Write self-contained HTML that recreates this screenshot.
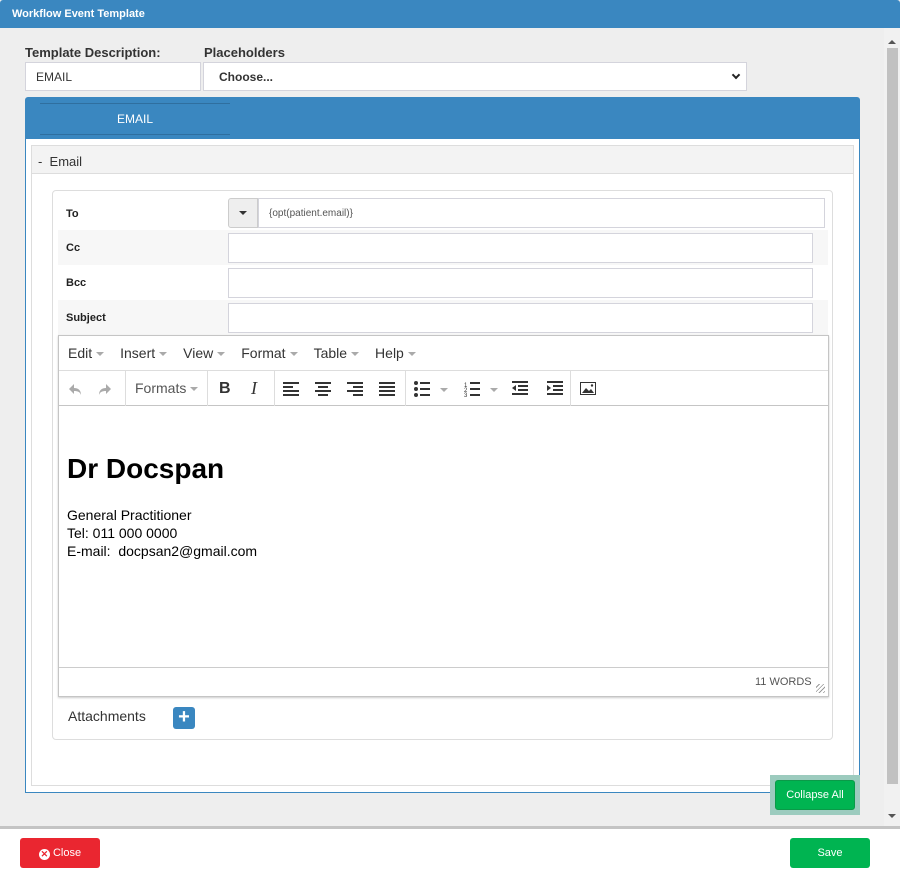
<!DOCTYPE html>
<html><head><meta charset="utf-8"><style>
*{box-sizing:border-box;margin:0;padding:0}
body{width:900px;height:874px;position:relative;background:#fff;font-family:"Liberation Sans",sans-serif;overflow:hidden}
.a{position:absolute}
.lbl{font-weight:bold;font-size:13px;color:#333}
.inp{background:#fff;border:1px solid #d4d4dc}
.row{position:absolute;left:58px;width:770px;height:35px}
.row b{position:absolute;left:8px;top:12px;font-size:11px;color:#222}
.menu span{margin-right:16px}
.menu span:after{content:"";display:inline-block;margin-left:4px;border:4px solid transparent;border-top-color:#aaa;border-bottom:0;vertical-align:middle}
.ic{position:absolute;top:10px}
.sep{position:absolute;top:0;width:1px;height:35px;background:#ddd}
</style></head><body>
<div class="a" style="left:0;top:0;width:900px;height:826px;background:#eeeeee"></div>
<div class="a" style="left:0;top:0;width:900px;height:28px;background:#3a87c0;border-radius:3px 3px 0 0"></div>
<div class="a" style="left:12px;top:8px;color:#fff;font-weight:bold;font-size:11px">Workflow Event Template</div>
<div class="a" style="left:884px;top:28px;width:16px;height:798px;background:#f1f1f1"></div>
<div class="a" style="left:887px;top:48px;width:11px;height:736px;background:#c1c1c1"></div>
<div class="a" style="left:888px;top:40px;border:4px solid transparent;border-bottom:4px solid #555;border-top:0"></div>
<div class="a" style="left:888px;top:814px;border:4px solid transparent;border-top:4px solid #555;border-bottom:0"></div>

<div class="a lbl" style="left:25px;top:45px">Template Description:</div>
<div class="a lbl" style="left:204px;top:45px">Placeholders</div>
<div class="a inp" style="left:25px;top:62px;width:176px;height:29px;font-size:12px;color:#333;padding:7px 10px">EMAIL</div>
<div class="a inp" style="left:203px;top:62px;width:544px;height:29px;font-size:12px;color:#333;font-weight:bold;padding:7px 15px">Choose...</div>
<div class="a" style="left:733px;top:72px;width:6px;height:6px;border-right:2px solid #222;border-bottom:2px solid #222;transform:rotate(45deg)"></div>

<div class="a" style="left:25px;top:97px;width:835px;height:696px;background:#3a87c0;border-radius:3px 3px 0 0"></div>
<div class="a" style="left:40px;top:103px;width:190px;height:32px;border-top:1px solid #2f6f9f;border-bottom:1px solid #2f6f9f;color:#fff;font-size:12px;text-align:center;line-height:31px">EMAIL</div>
<div class="a" style="left:26px;top:139px;width:833px;height:653px;background:#fff"></div>
<div class="a" style="left:31px;top:145px;width:823px;height:641px;border:1px solid #ddd;background:#fff"></div>
<div class="a" style="left:32px;top:146px;width:821px;height:28px;background:#f3f3f3;border-bottom:1px solid #ddd;font-size:13px;color:#333;padding:8px 6px">-&nbsp; Email</div>
<div class="a" style="left:52px;top:190px;width:781px;height:550px;border:1px solid #ddd;border-radius:4px;background:#fff"></div>

<div class="row" style="top:196px;background:#fff"><b>To</b></div>
<div class="row" style="top:230px;background:#f7f7f7"><b>Cc</b></div>
<div class="row" style="top:265px;background:#fff"><b>Bcc</b></div>
<div class="row" style="top:300px;background:#f7f7f7"><b>Subject</b></div>
<div class="a" style="left:228px;top:198px;width:30px;height:30px;background:#eee;border:1px solid #ccc;border-radius:3px 0 0 3px"></div>
<div class="a" style="left:239px;top:211px;border:4px solid transparent;border-top:4px solid #333;border-bottom:0"></div>
<div class="a inp" style="left:258px;top:198px;width:567px;height:30px;font-size:10px;color:#555;padding:9px 10px">{opt(patient.email)}</div>
<div class="a inp" style="left:228px;top:233px;width:585px;height:30px"></div>
<div class="a inp" style="left:228px;top:268px;width:585px;height:30px"></div>
<div class="a inp" style="left:228px;top:303px;width:585px;height:30px"></div>

<div class="a" style="left:58px;top:335px;width:771px;height:362px;border:1px solid #c5c5c5;background:#fff;box-shadow:0 1px 2px rgba(0,0,0,.2)"></div>
<div class="a menu" style="left:68px;top:345px;font-size:14px;color:#333;white-space:nowrap"><span>Edit</span><span>Insert</span><span>View</span><span>Format</span><span>Table</span><span>Help</span></div>
<div class="a" style="left:59px;top:370px;width:769px;height:36px;border-top:1px solid #ddd;border-bottom:1px solid #c5c5c5">
 <div class="sep" style="left:66px"></div><div class="sep" style="left:148px"></div><div class="sep" style="left:215px"></div><div class="sep" style="left:346px"></div><div class="sep" style="left:511px"></div>
 <svg class="ic" style="left:9px" width="50" height="16" fill="#aaa"><path d="M6 3L1 8l5 5V10c4 0 6 1 7 4 0-5-3-7-7-7z"/><path d="M38 3l5 5-5 5V10c-4 0-6 1-7 4 0-5 3-7 7-7z"/></svg>
 <div class="ic" style="left:76px;font-size:14px;color:#555;top:9px">Formats<span style="display:inline-block;margin-left:4px;border:4px solid transparent;border-top-color:#aaa;border-bottom:0;vertical-align:middle"></span></div>
 <div class="ic" style="left:160px;font-weight:bold;font-size:16px;color:#333;top:9px">B</div>
 <div class="ic" style="left:192px;font-style:italic;font-family:'Liberation Serif';font-size:18px;color:#333;top:7px">I</div>
 <svg class="ic" style="left:224px" width="330" height="16" fill="#333">
  <g><rect x="0" y="1" width="16" height="2"/><rect x="0" y="5" width="10" height="2"/><rect x="0" y="9" width="16" height="2"/><rect x="0" y="13" width="16" height="2"/></g>
  <g transform="translate(32)"><rect x="0" y="1" width="16" height="2"/><rect x="3" y="5" width="10" height="2"/><rect x="0" y="9" width="16" height="2"/><rect x="3" y="13" width="10" height="2"/></g>
  <g transform="translate(64)"><rect x="0" y="1" width="16" height="2"/><rect x="6" y="5" width="10" height="2"/><rect x="0" y="9" width="16" height="2"/><rect x="6" y="13" width="10" height="2"/></g>
  <g transform="translate(96)"><rect x="0" y="1" width="16" height="2"/><rect x="0" y="5" width="16" height="2"/><rect x="0" y="9" width="16" height="2"/><rect x="0" y="13" width="16" height="2"/></g>
  <g transform="translate(131)"><circle cx="2" cy="2" r="2"/><circle cx="2" cy="8" r="2"/><circle cx="2" cy="14" r="2"/><rect x="6" y="1" width="10" height="2"/><rect x="6" y="7" width="10" height="2"/><rect x="6" y="13" width="10" height="2"/><path d="M26 7h8l-4 4z" fill="#aaa"/></g>
  <g transform="translate(181)"><text x="0" y="6" font-size="6">1</text><text x="0" y="11" font-size="6">2</text><text x="0" y="16" font-size="6">3</text><rect x="6" y="1" width="10" height="2"/><rect x="6" y="7" width="10" height="2"/><rect x="6" y="13" width="10" height="2"/><path d="M26 7h8l-4 4z" fill="#aaa"/></g>
  <g transform="translate(229)"><rect x="0" y="0" width="16" height="2"/><rect x="6" y="4" width="10" height="2"/><rect x="6" y="8" width="10" height="2"/><rect x="0" y="12" width="16" height="2"/><path d="M4 4v6l-4-3z"/></g>
  <g transform="translate(264)"><rect x="0" y="0" width="16" height="2"/><rect x="6" y="4" width="10" height="2"/><rect x="6" y="8" width="10" height="2"/><rect x="0" y="12" width="16" height="2"/><path d="M0 4v6l4-3z"/></g>
  <g transform="translate(297)"><rect x="0.5" y="1.5" width="15" height="12" fill="none" stroke="#333"/><path d="M2 12l4-5 3 3 2-2 3 4z"/><circle cx="12" cy="4.5" r="1.2"/></g>
 </svg>
</div>
<div class="a" style="left:67px;top:453px;font-size:28px;font-weight:bold;color:#000">Dr Docspan</div>
<div class="a" style="left:67px;top:506px;font-size:14px;line-height:18px;color:#000">General Practitioner<br>Tel: 011 000 0000<br>E-mail:&nbsp; docpsan2@gmail.com</div>
<div class="a" style="left:59px;top:667px;width:769px;height:1px;background:#ccc"></div>
<div class="a" style="left:755px;top:676px;font-size:11px;color:#555">11 WORDS</div>
<div class="a" style="left:816px;top:684px;width:9px;height:9px;background:repeating-linear-gradient(135deg,transparent 0 2px,#999 2px 3px)"></div>

<div class="a" style="left:68px;top:708px;font-size:14px;color:#333">Attachments</div>
<div class="a" style="left:173px;top:707px;width:22px;height:22px;background:#3a87c0;border-radius:3px;color:#fff;font-weight:bold;font-size:20px;line-height:21px;text-align:center">+</div>

<div class="a" style="left:770px;top:775px;width:90px;height:40px;background:#9ccbbe"></div>
<div class="a" style="left:775px;top:780px;width:80px;height:30px;background:#00b451;border:1px solid #0a9a48;border-radius:3px;color:#fff;font-size:11px;text-align:center;line-height:28px">Collapse All</div>

<div class="a" style="left:0;top:826px;width:900px;height:3px;background:#c4c4c4"></div>
<div class="a" style="left:20px;top:838px;width:80px;height:30px;background:#ea2630;border-radius:3px;color:#fff;font-size:11px;text-align:center;line-height:30px"><span style="display:inline-block;width:11px;height:11px;border-radius:50%;background:#fff;color:#ea2630;font-size:9px;line-height:11px;font-weight:bold;vertical-align:-1px">✕</span> Close</div>
<div class="a" style="left:790px;top:838px;width:80px;height:30px;background:#00b451;border-radius:3px;color:#fff;font-size:11px;text-align:center;line-height:30px">Save</div>
</body></html>
